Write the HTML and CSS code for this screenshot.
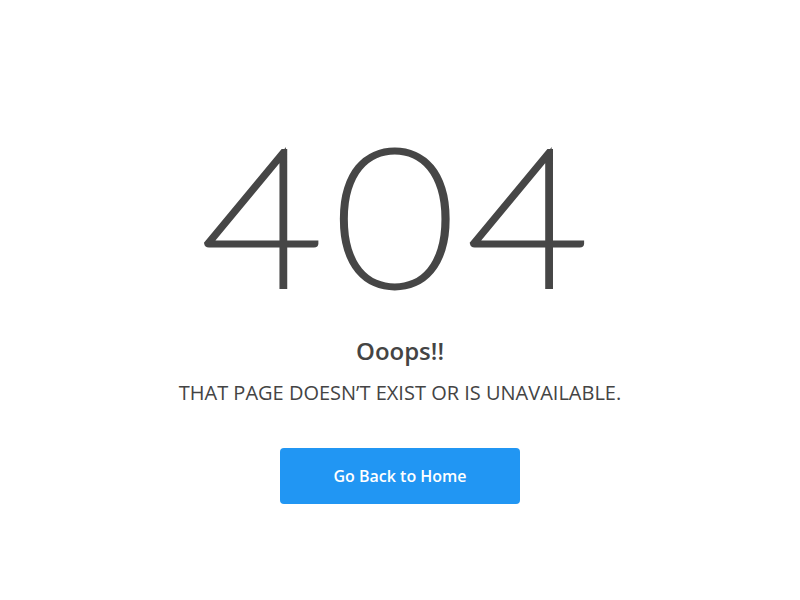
FILE: index.html
```html
<!DOCTYPE html>
<html lang="en">
<head>
<meta charset="utf-8">
<title>404</title>
<link rel="stylesheet" href="styles.css">
</head>
<body>
<main class="page">
  <h1 class="code">404</h1>
  <h2 class="title">Ooops!!</h2>
  <p class="message">THAT PAGE DOESN’T EXIST OR IS UNAVAILABLE.</p>
  <a class="btn" href="#">Go Back to Home</a>
</main>
</body>
</html>
```

FILE: styles.css
```css
html, body {
  margin: 0;
  padding: 0;
  background: #ffffff;
}
body {
  font-family: "Open Sans", "Liberation Sans", sans-serif;
  color: #444444;
}
.page {
  height: 600px;
  display: flex;
  flex-direction: column;
  align-items: center;
  box-sizing: border-box;
  padding-top: 101px;
}
.code {
  margin: 0 10px 0 0;
  font-family: Lato, "Open Sans", sans-serif;
  font-weight: 100;
  font-size: 193px;
  line-height: 224px;
  color: #464646;
  -webkit-text-stroke: 5px #464646;
  letter-spacing: 10px;
  padding-left: 9px;
  transform: scaleX(1.09);
}
.title {
  margin: 0;
  margin-top: 11px;
  font-size: 24px;
  font-weight: 600;
  line-height: 30px;
}
.message {
  margin: 0;
  margin-top: 13px;
  font-size: 20px;
  line-height: 28px;
}
.btn {
  margin-top: 41px;
  width: 240px;
  height: 56px;
  display: flex;
  align-items: center;
  justify-content: center;
  background: #2196f3;
  border-radius: 4px;
  color: #ffffff;
  text-decoration: none;
  font-size: 16px;
  font-weight: 600;
}
```
